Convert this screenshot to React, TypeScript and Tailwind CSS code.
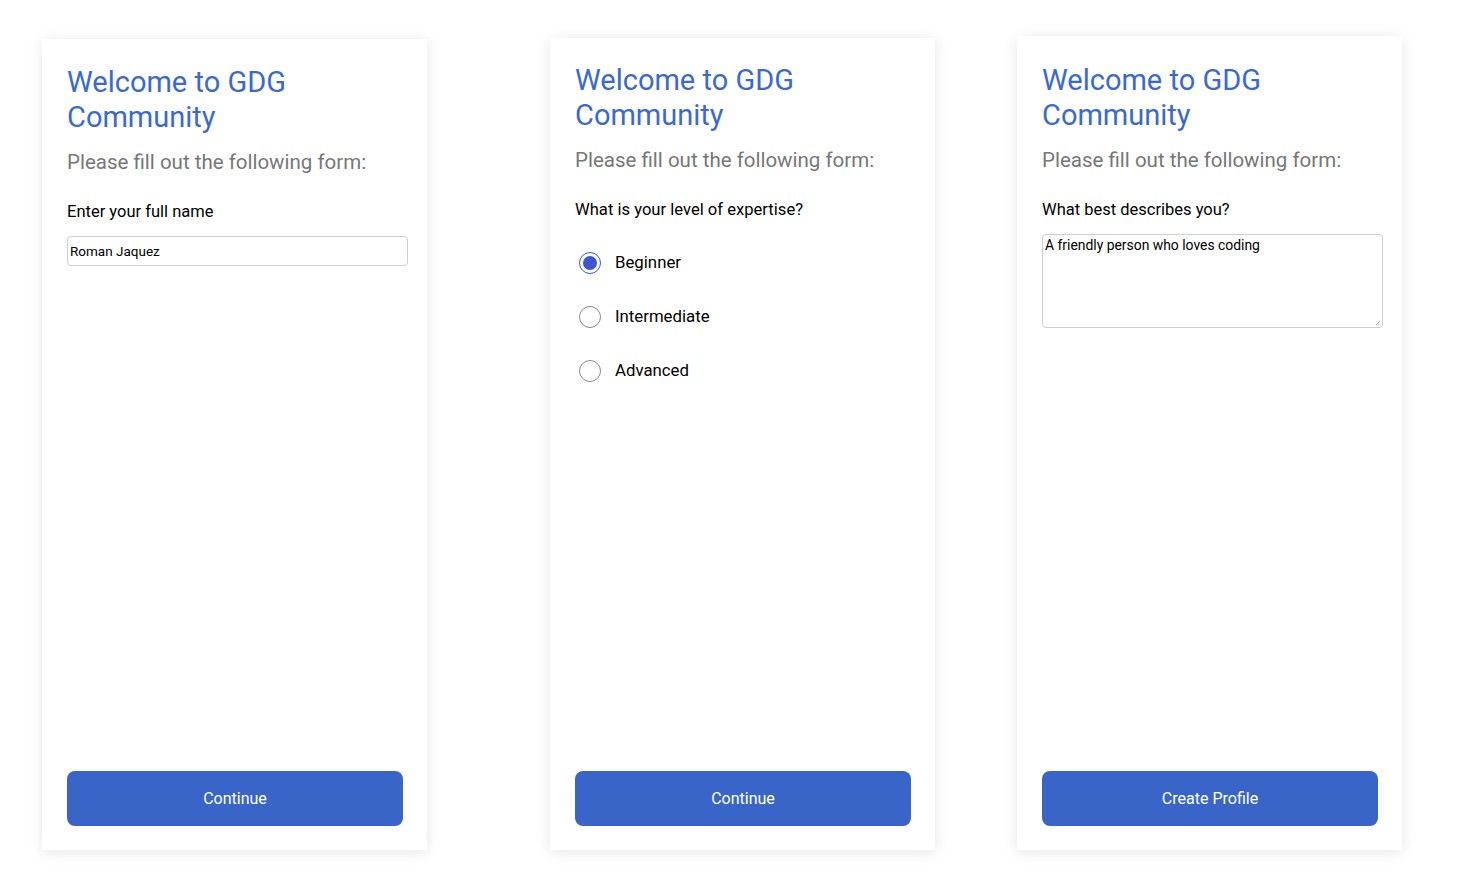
import { JSX } from "react";

const font = { fontFamily: "Roboto, 'Open Sans', sans-serif" };

function Card({
  box,
  children,
  button,
}: {
  box: string;
  children: React.ReactNode;
  button: string;
}): JSX.Element {
  return (
    <div
      className={`flex w-[385px] flex-col bg-white px-[25px] pb-[24px] shadow-[0_2px_14px_rgba(0,0,0,0.10)] ${box}`}
    >
      <h1 className="text-[29px] leading-[35px] text-[#3a6ad0]">
        Welcome to GDG
        <br />
        Community
      </h1>
      <p className="mt-[13px] text-[20.5px] leading-[28px] text-[#777777]">
        Please fill out the following form:
      </p>
      <div className="mt-[26px] flex-1">{children}</div>
      <button className="h-[55px] w-[336px] rounded-[8px] bg-[#3a65c8] text-[16px] text-white">
        {button}
      </button>
    </div>
  );
}

function Radio({ label, checked }: { label: string; checked?: boolean }): JSX.Element {
  return (
    <div className="flex h-[22px] items-center gap-[14px] pl-[4px]">
      <span
        className={`flex h-[22px] w-[22px] items-center justify-center rounded-full border ${
          checked ? "border-[#3b5bd8]" : "border-[#8a8a8a]"
        }`}
      >
        {checked && <span className="h-[14px] w-[14px] rounded-full bg-[#3b55d3]" />}
      </span>
      <span className="text-[16.8px] text-black">{label}</span>
    </div>
  );
}

export default function App(): JSX.Element {
  return (
    <div className="flex h-[895px] w-[1458px] items-end bg-white pb-[45px] pl-[42px]" style={font}>
      <Card box="h-[811px] pt-[26px]" button="Continue">
        <div className="text-[16.5px] leading-[20px] text-black">Enter your full name</div>
        <div className="mt-[14px] flex h-[30px] w-[341px] items-center rounded-[4px] border border-[#cfcfcf] px-[2px] text-[13.5px] text-black">
          Roman Jaquez
        </div>
      </Card>
      <Card box="ml-[123px] h-[812px] pt-[25px]" button="Continue">
        <div className="text-[16.6px] leading-[20px] text-black">What is your level of expertise?</div>
        <div className="mt-[32px] flex flex-col gap-[32px]">
          <Radio label="Beginner" checked />
          <Radio label="Intermediate" />
          <Radio label="Advanced" />
        </div>
      </Card>
      <Card box="ml-[82px] h-[814px] pt-[27px]" button="Create Profile">
        <div className="text-[16.5px] leading-[20px] text-black">What best describes you?</div>
        <div className="relative mt-[14px] h-[94px] w-[341px] rounded-[4px] border border-[#cfcfcf] px-[2px] pt-[2px] text-[13.9px] leading-[16px] text-black">
          A friendly person who loves coding
          <svg className="absolute bottom-[1px] right-[1px]" width="6" height="6" viewBox="0 0 6 6">
            <path d="M5 1 L1 5 M5 3.5 L3.5 5" stroke="#999" strokeWidth="0.8" />
          </svg>
        </div>
      </Card>
    </div>
  );
}
